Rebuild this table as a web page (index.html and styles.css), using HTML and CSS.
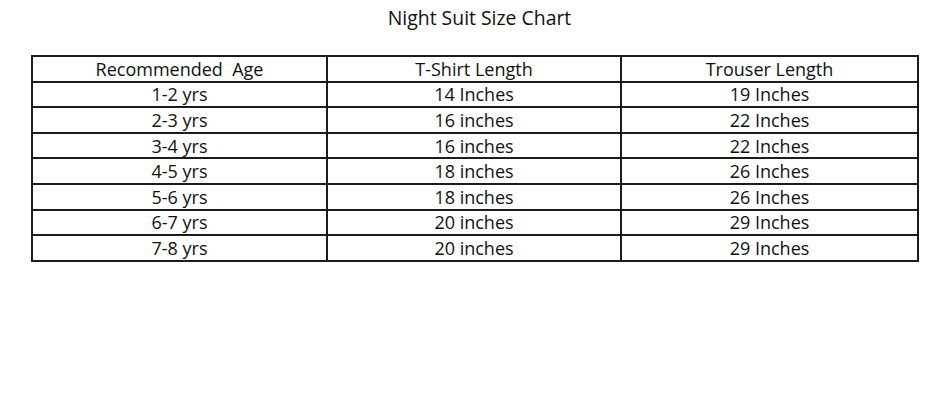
FILE: index.html
```html
<!DOCTYPE html>
<html>
<head>
<meta charset="utf-8">
<link rel="stylesheet" href="styles.css">
</head>
<body>
<div class="page">
  <h1 class="title">Night Suit Size Chart</h1>
  <table class="chart">
    <tr><td>Recommended&nbsp; Age</td><td>T-Shirt Length</td><td>Trouser Length</td></tr>
    <tr><td>1-2 yrs</td><td>14 Inches</td><td>19 Inches</td></tr>
    <tr><td>2-3 yrs</td><td>16 inches</td><td>22 Inches</td></tr>
    <tr><td>3-4 yrs</td><td>16 inches</td><td>22 Inches</td></tr>
    <tr><td>4-5 yrs</td><td>18 inches</td><td>26 Inches</td></tr>
    <tr><td>5-6 yrs</td><td>18 inches</td><td>26 Inches</td></tr>
    <tr><td>6-7 yrs</td><td>20 inches</td><td>29 Inches</td></tr>
    <tr><td>7-8 yrs</td><td>20 inches</td><td>29 Inches</td></tr>
  </table>
</div>
</body>
</html>
```
FILE: styles.css
```css
html, body {
  margin: 0;
  padding: 0;
  background: #fff;
}
.page {
  width: 938px;
  height: 400px;
  padding-top: 6px;
  box-sizing: border-box;
  font-family: "Open Sans", "Liberation Sans", sans-serif;
  color: #111;
}
.title {
  margin: 0;
  padding-left: 21px;
  height: 24px;
  font-size: 19.4px;
  line-height: 24px;
  font-weight: normal;
  text-align: center;
}
.chart {
  margin: 25px 0 0 31px;
  width: 888px;
  border-collapse: collapse;
  table-layout: fixed;
  font-size: 18px;
}
.chart td {
  border: 2px solid #1c1c1c;
  height: 23.6px;
  padding: 0;
  text-align: center;
  vertical-align: middle;
  line-height: 20px;
}
.chart td:nth-child(1) { width: 293px; }
.chart td:nth-child(2) { width: 292px; }
```
